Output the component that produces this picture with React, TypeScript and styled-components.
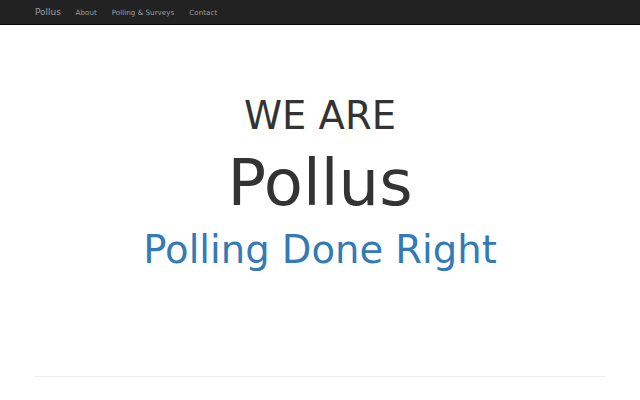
import styled, { createGlobalStyle } from 'styled-components';

const GlobalStyle = createGlobalStyle`
  html, body {
    margin: 0;
    padding: 0;
    background: #fff;
    font-family: "DejaVu Sans", "Liberation Sans", sans-serif;
    color: #333;
  }
`;

const Navbar = styled.nav`
  height: 24px;
  background-color: #222;
  border-bottom: 1px solid #080808;
`;

const Container = styled.div`
  width: 570px;
  margin: 0 auto;
`;

const NavInner = styled(Container)`
  display: flex;
  align-items: center;
  height: 100%;
`;

const Brand = styled.a`
  font-size: 9px;
  color: #9d9d9d;
  text-decoration: none;
  margin-right: 7px;
`;

const NavLink = styled.a`
  font-size: 7.2px;
  color: #9d9d9d;
  text-decoration: none;
  padding: 0 7.5px;
`;

const Hero = styled.section`
  padding-top: 70px;
  text-align: center;
`;

const Heading = styled.h1<{ $size: number; $color?: string; $gap?: number }>`
  margin: ${p => p.$gap ?? 0}px 0 0;
  font-size: ${p => p.$size}px;
  font-weight: normal;
  line-height: 1.1;
  color: ${p => p.$color ?? '#333'};
`;

const Rule = styled.hr`
  margin: 105px 0 0;
  border: 0;
  border-top: 1px solid #eee;
`;

export default function App() {
  return (
    <>
      <GlobalStyle />
      <Navbar>
        <NavInner>
          <Brand href="#">Pollus</Brand>
          <NavLink href="#">About</NavLink>
          <NavLink href="#">Polling &amp; Surveys</NavLink>
          <NavLink href="#">Contact</NavLink>
        </NavInner>
      </Navbar>
      <Container>
        <Hero>
          <Heading $size={38.5}>WE ARE</Heading>
          <Heading $size={64} $gap={11}>Pollus</Heading>
          <Heading $size={38.5} $color="#337ab7" $gap={10}>Polling Done Right</Heading>
        </Hero>
        <Rule />
      </Container>
    </>
  );
}
